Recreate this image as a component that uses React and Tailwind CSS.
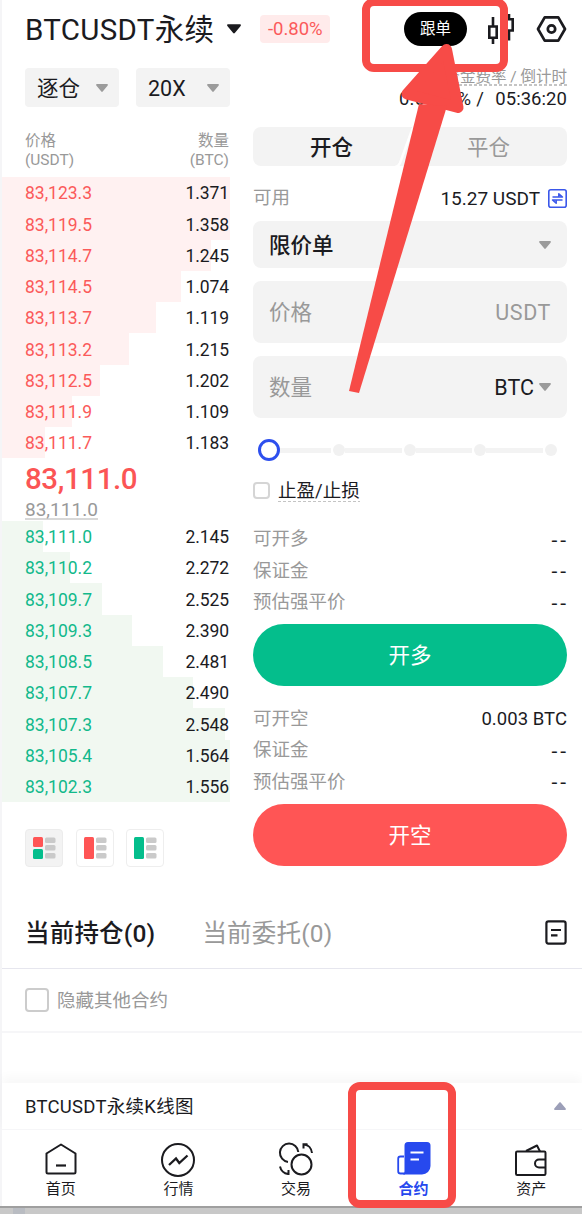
import { useState } from 'react';
import clsx from 'clsx';

const asks = [
  { price: '83,123.3', amount: '1.371', depth: 228 },
  { price: '83,119.5', amount: '1.358', depth: 228 },
  { price: '83,114.7', amount: '1.245', depth: 209 },
  { price: '83,114.5', amount: '1.074', depth: 179 },
  { price: '83,113.7', amount: '1.119', depth: 154 },
  { price: '83,113.2', amount: '1.215', depth: 127 },
  { price: '83,112.5', amount: '1.202', depth: 98 },
  { price: '83,111.9', amount: '1.109', depth: 70 },
  { price: '83,111.7', amount: '1.183', depth: 43 },
];

const bids = [
  { price: '83,111.0', amount: '2.145', depth: 41 },
  { price: '83,110.2', amount: '2.272', depth: 68 },
  { price: '83,109.7', amount: '2.525', depth: 100 },
  { price: '83,109.3', amount: '2.390', depth: 130 },
  { price: '83,108.5', amount: '2.481', depth: 161 },
  { price: '83,107.7', amount: '2.490', depth: 191 },
  { price: '83,107.3', amount: '2.548', depth: 223 },
  { price: '83,105.4', amount: '1.564', depth: 228 },
  { price: '83,102.3', amount: '1.556', depth: 228 },
];

const Caret = ({ className }) => (
  <svg viewBox="0 0 12 8" className={clsx('shrink-0', className)} fill="currentColor">
    <path d="M1 0h10c.8 0 1.200.8.7 1.400L6.700 7.500c-.4.500-1 .5-1.400 0L.3 1.400C-.2.800.2 0 1 0z" />
  </svg>
);

const CandleIcon = () => (
  <svg width="28" height="32" viewBox="0 0 28 32" fill="none" stroke="#1b1b1f" strokeWidth="2.6">
    <path d="M2.300 13.500h7.400v11.200H2.300zM6 4v9.500M6 24.700v6.300" />
    <path d="M18.300 6.300h7.400v11.200h-7.400zM22 1v5.300M22 17.500v10" />
  </svg>
);

const HexIcon = () => (
  <svg width="31" height="28" viewBox="0 0 31 28" fill="none" stroke="#1b1b1f" strokeWidth="2.700" strokeLinejoin="round">
    <path d="M8.700 2.300h13.600L29 14l-6.700 11.700H8.700L2 14z" />
    <circle cx="15.500" cy="14" r="3.700" />
  </svg>
);

const TransferIcon = () => (
  <svg width="19" height="19" viewBox="0 0 19 19" fill="none" stroke="#3a57ea">
    <rect x=".8" y=".8" width="17.400" height="17.400" rx="2" strokeWidth="1.600" />
    <path d="M4.500 8h10L10.800 4.700V8M14.500 11h-10l3.700 3.300V11" strokeWidth="1.500" strokeLinejoin="round" />
  </svg>
);

const NoteIcon = () => (
  <svg width="22" height="25" viewBox="0 0 22 25" fill="none" stroke="#1b1b1f" strokeWidth="2.200">
    <rect x="1.400" y="1.400" width="19.200" height="22.200" rx="2" />
    <path d="M6 10h10M6 15.300h6.500" />
  </svg>
);

const BookIcon = ({ top, bottom }) => (
  <svg width="24" height="24" viewBox="0 0 24 24">
    {bottom ? (
      <>
        <rect x="1" y="1" width="10" height="10" rx="1.500" fill={top} />
        <rect x="1" y="13" width="10" height="10" rx="1.500" fill={bottom} />
      </>
    ) : (
      <rect x="1" y="1" width="10" height="22" rx="1.500" fill={top} />
    )}
    <rect x="13" y="1.500" width="10.500" height="5.500" rx="1.500" fill="#cacaca" />
    <rect x="13" y="9" width="10.500" height="5.500" rx="1.500" fill="#cacaca" />
    <rect x="13" y="17" width="10.500" height="5.500" rx="1.500" fill="#cacaca" />
  </svg>
);

const HomeIcon = () => (
  <svg width="36" height="36" viewBox="0 0 36 36" fill="none" stroke="#1b1b1f" strokeWidth="2" strokeLinejoin="round">
    <path d="M3.500 12.500 18 3.500l14.500 9v18.500a1.500 1.500 0 0 1-1.500 1.500H5a1.500 1.500 0 0 1-1.500-1.500z" />
    <path d="M13 24.500h10" strokeWidth="2.200" />
  </svg>
);

const MarketIcon = () => (
  <svg width="36" height="36" viewBox="0 0 36 36" fill="none" stroke="#1b1b1f" strokeWidth="2">
    <circle cx="18" cy="19" r="16" />
    <path d="m9 24 7-6.500 3.300 4.500 8.200-7.500" strokeWidth="2.300" />
  </svg>
);

const TradeIcon = () => (
  <svg width="36" height="36" viewBox="0 0 36 36" fill="none" stroke="#1b1b1f" strokeWidth="2">
    <path d="M10 20.900A9.200 9.200 0 1 1 20.300 11" />
    <circle cx="23.500" cy="23.500" r="10" />
    <path d="M2 25.500c.8 3.800 4 7 8 7.500M10.500 29v5M26 3.500c4.500.3 7.500 4 8 8.500M25.500 7.500V3.200h4" />
  </svg>
);

const ContractIcon = () => (
  <svg width="36" height="36" viewBox="0 0 36 36" fill="none">
    <path d="M8 15.500H4.500A2.300 2.300 0 0 0 2.200 17.800v12.400a2.300 2.300 0 0 0 2.300 2.300H9" stroke="#2749ee" strokeWidth="1.800" />
    <path d="M12 1h19a3.500 3.500 0 0 1 3.500 3.500V25a8.500 8.500 0 0 1-8.500 8.500H7c1-.8 1.500-2 1.500-3.500V4.500A3.500 3.500 0 0 1 12 1z" fill="#2749ee" />
    <path d="M14.500 11.500h13M14.500 18.500h8.500" stroke="#fff" strokeWidth="2.200" />
  </svg>
);

const WalletIcon = () => (
  <svg width="36" height="36" viewBox="0 0 36 36" fill="none" stroke="#1b1b1f" strokeWidth="2" strokeLinejoin="round">
    <rect x="3" y="10.500" width="29.500" height="23.500" rx="1.200" />
    <path d="m13 10 11-5.500 3 6" />
    <path d="M32.500 18.500H26a4 4 0 0 0 0 8h6.500" />
  </svg>
);

const navItems = [
  { label: '首页', Icon: HomeIcon },
  { label: '行情', Icon: MarketIcon },
  { label: '交易', Icon: TradeIcon },
  { label: '合约', Icon: ContractIcon, active: true },
  { label: '资产', Icon: WalletIcon },
];

const DashedLine = () => (
  <div className="h-[1.5px] w-full bg-[repeating-linear-gradient(90deg,#c4c4c4_0_3px,transparent_3px_5px)]" />
);

const BookRow = ({ row, side }) => (
  <div className="relative flex h-[31.25px] items-center justify-between pl-[23px] pr-px pt-[3px] text-[17.5px] leading-none">
    <div
      className={clsx('absolute inset-y-0 left-0', side === 'ask' ? 'bg-[#fff1f1]' : 'bg-[#f1f8f1]')}
      style={{ width: row.depth }}
    />
    <span className={clsx('relative', side === 'ask' ? 'text-[#fb5a5a]' : 'text-[#12b98b]')}>
      {row.price}
    </span>
    <span className="relative tracking-[-0.1px]">{row.amount}</span>
  </div>
);

const Chip = ({ children }) => (
  <div className="flex h-[39px] w-[94px] items-center justify-between rounded bg-[#f3f3f3] pl-3 pr-[11px] text-[21.5px]">
    <span className="pt-[3px]">{children}</span>
    <Caret className="h-2 w-3 text-[#9b9b9b]" />
  </div>
);

const InfoRow = ({ label, value = '--' }) => (
  <div className="flex h-[31.25px] items-center justify-between pt-[3px]">
    <span className="text-[18.5px] text-[#999]">{label}</span>
    {value === '--' ? (
      <span className="-mr-0.5 text-[21px] leading-6 tracking-[3px]">--</span>
    ) : (
      <span className="text-[18.5px] tracking-[0.05px]">{value}</span>
    )}
  </div>
);

const OrderBook = () => (
  <div className="w-[228px] shrink-0">
    <div className="flex gap-[17px] pl-[23px] pt-[10px]">
      <Chip>逐仓</Chip>
      <Chip>20X</Chip>
    </div>
    <div className="mb-[8px] mt-[25px] flex h-[37px] justify-between pl-[23px] pr-px text-[15.500px] leading-[18.500px] text-[#999]">
      <div>价格<br />(USDT)</div>
      <div className="text-right">数量<br />(BTC)</div>
    </div>
    {asks.map((row) => <BookRow key={row.price} row={row} side="ask" />)}
    <div className="flex h-[62.500px] flex-col items-start pl-[23px]">
      <div className="h-10 text-[29.500px] font-medium leading-[42px] tracking-[-0.400px] text-[#fb5555]">83,111.0</div>
      <div className="h-[22px] border-b-2 border-[#d8d8d8] text-[19px] leading-[23px] text-[#999]">83,111.0</div>
    </div>
    {bids.map((row) => <BookRow key={row.price} row={row} side="bid" />)}
    <div className="mt-[27px] flex gap-[12.500px] pl-[23px]">
      <div className="flex size-[38px] items-center justify-center rounded border border-[#ececec] bg-[#f3f3f3]">
        <BookIcon top="#ff5555" bottom="#04be8c" />
      </div>
      <div className="flex size-[38px] items-center justify-center rounded border border-[#eee]">
        <BookIcon top="#ff5555" />
      </div>
      <div className="flex size-[38px] items-center justify-center rounded border border-[#eee]">
        <BookIcon top="#04be8c" />
      </div>
    </div>
  </div>
);

const OrderForm = () => (
  <div className="w-[314px] shrink-0">
    <div className="flex flex-col items-end pt-[9px]">
      <div className="h-[18px] text-[15.500px] leading-[18px] text-[#999]">
        <div className="h-[17px] pt-px">资金费率 / 倒计时</div>
        <DashedLine />
      </div>
      <div className="mt-1 flex h-5 gap-[11px] text-[18.500px] leading-5">
        <span className="tracking-[0.300px]">0.0100% /</span>
        <span className="tracking-[0.050px]">05:36:20</span>
      </div>
    </div>

    <div className="relative mt-[18px] flex h-[39px] items-center rounded-lg bg-[#f3f3f3] pt-[3px] text-[21.500px]">
      <div className="flex-1 text-center font-medium">开仓</div>
      <div className="flex-1 text-center text-[#999]">平仓</div>
      <svg className="absolute left-[142px] top-0" width="28" height="39" viewBox="0 0 28 39" fill="none" stroke="#fff" strokeWidth="2.500">
        <path d="M0 40c3 0 4-2 5-4L17 3c1-2 2-4 5-4" />
      </svg>
    </div>

    <div className="flex h-[55px] items-center justify-between pt-[9px]">
      <span className="pt-px text-[18.500px] text-[#999]">可用</span>
      <div className="flex items-center gap-2 text-[19px]">
        <span className="pt-[3px]">15.27 USDT</span>
        <TransferIcon />
      </div>
    </div>

    <div className="flex h-[47px] items-center justify-between rounded-lg bg-[#f3f3f3] px-4">
      <span className="pt-[3px] text-[21.500px] font-medium">限价单</span>
      <Caret className="h-2 w-3 text-[#9b9b9b]" />
    </div>
    <div className="mt-[13px] flex h-[62px] items-center justify-between rounded-lg bg-[#f3f3f3] px-4 pt-[3px] text-[21.500px] text-[#999]">
      <span>价格</span>
      <span className="tracking-[0.600px]">USDT</span>
    </div>
    <div className="mt-[13px] flex h-[62px] items-center justify-between rounded-lg bg-[#f3f3f3] px-4 text-[21.500px] text-[#999]">
      <span className="pt-[3px]">数量</span>
      <div className="flex items-center gap-[5px]">
        <span className="pt-[3px] text-[#1b1b1f]">BTC</span>
        <Caret className="h-2 w-3 text-[#9b9b9b]" />
      </div>
    </div>

    <div className="mt-5 flex h-6 items-center pl-[4.500px] pr-[10px]">
      <div className="size-[22px] shrink-0 rounded-full border-[3px] border-[#2d4fee]" />
      {[25, 50, 75, 100].map((step) => (
        <div key={step} className={clsx('flex items-center gap-0.5', step === 25 ? 'w-[65.500px]' : 'flex-1')}>
          <div className="h-[5px] flex-1 bg-[#f3f3f3]" />
          <div className="size-3 rounded-full bg-[#f1f1f1]" />
        </div>
      ))}
    </div>

    <div className="mt-[17px] flex h-[22px] items-center gap-2">
      <div className="size-[17px] rounded-sm border-2 border-[#d5d5d5]" />
      <div className="text-[18.500px] leading-5">
        <div className="pt-[3px]">止盈/止损</div>
        <DashedLine />
      </div>
    </div>

    <div className="mt-[22px]">
      <InfoRow label="可开多" />
      <InfoRow label="保证金" />
      <InfoRow label="预估强平价" />
    </div>
    <button className="mt-[7px] block h-[62px] w-full rounded-full bg-[#04be8c] pt-[3px] text-[21.500px] text-white">开多</button>

    <div className="mt-[17px]">
      <InfoRow label="可开空" value="0.003 BTC" />
      <InfoRow label="保证金" />
      <InfoRow label="预估强平价" />
    </div>
    <button className="mt-[7px] block h-[62px] w-full rounded-full bg-[#ff5555] pt-1 text-[21.500px] text-white">开空</button>
  </div>
);

const App = () => {
  const [hideOthers, setHideOthers] = useState(false);

  return (
    <div className="relative h-[1214px] w-[582px] overflow-hidden bg-[#c8c8c8] font-['Roboto','Noto_Sans_CJK_SC',sans-serif] text-[#1b1b1f]">
      <div className="h-[1206px] border-l-2 border-[#f5f5f7] bg-white">
        <header className="flex h-[58px] items-center pl-[23px] pr-[15px]">
          <h1 className="whitespace-nowrap pt-[3px] text-[29.500px] leading-none tracking-[0.300px]">BTCUSDT永续</h1>
          <Caret className="ml-[13px] h-[10px] w-[14px]" />
          <span className="ml-[19px] flex h-7 w-[70px] items-center justify-center rounded bg-[#ffebeb] pt-0.5 text-[18.500px] text-[#fb5a5a]">
            -0.80%
          </span>
          <div className="ml-auto flex items-center">
            <div className="flex h-[34px] w-[63px] items-center justify-center rounded-full bg-black pt-0.5 text-[15.500px] text-white">
              跟单
            </div>
            <div className="ml-5 mr-[21px]"><CandleIcon /></div>
            <HexIcon />
          </div>
        </header>

        <main className="flex h-[839px] gap-[23px]">
          <OrderBook />
          <OrderForm />
        </main>

        <div className="flex h-[72px] items-center border-b border-[#e6e6ee] pl-[23px] pr-[15px] text-[24.500px]">
          <span className="pt-[3px] font-medium tracking-[0.200px]">当前持仓(0)</span>
          <span className="ml-[47px] pt-[3px] tracking-[0.200px] text-[#999]">当前委托(0)</span>
          <div className="ml-auto"><NoteIcon /></div>
        </div>
        <div className="flex h-[64px] items-center gap-2 border-b-2 border-[#f6f6f8] pl-[23px]">
          <button
            onClick={() => setHideOthers(!hideOthers)}
            className={clsx('size-6 rounded border-2 border-[#ccc]', hideOthers && 'bg-[#2749ee]')}
          />
          <span className="pt-[3px] text-[18.500px] text-[#999]">隐藏其他合约</span>
        </div>

        <div className="mt-[50px] flex h-[47px] items-center justify-between border-b border-[#f6f6f8] pl-[23px] pr-4 shadow-[0_-6px_10px_rgba(0,0,0,0.03)]">
          <span className="pt-[3px] text-[18.500px] tracking-[0.250px]">BTCUSDT永续K线图</span>
          <Caret className="h-2 w-3 rotate-180 text-[#9c9fb8]" />
        </div>
        <nav className="grid h-[76px] w-[588px] grid-cols-5 pt-[11px]">
          {navItems.map(({ label, Icon, active }) => (
            <div key={label} className={clsx('flex flex-col items-center', active && 'font-bold text-[#2749ee]')}>
              <Icon />
              <span className="pt-px text-[15px] leading-[22px]">{label}</span>
            </div>
          ))}
        </nav>
      </div>
      <div className="flex h-2 border-t-2 border-[#9f9f9f] pl-[13px]">
        <div className="h-full w-3 bg-[#b9bcc2]" />
      </div>

      {/* tutorial highlights */}
      <div className="absolute left-[362px] top-[-2px] h-[74px] w-[146px] rounded-xl border-8 border-[#f74b47]" />
      <div className="absolute left-[348px] top-[1082px] h-[126px] w-[108px] rounded-xl border-8 border-[#f74b47]" />
      <svg className="absolute left-[340px] top-[36px]" width="140" height="364" viewBox="340 36 140 364" fill="#f74b47">
        <path d="M446.500 49.500 458 107.500 407 94z" stroke="#f74b47" strokeWidth="11" strokeLinejoin="round" />
        <path d="M419 104 349 391l10 2L447 106z" />
      </svg>
    </div>
  );
};

export default App;
